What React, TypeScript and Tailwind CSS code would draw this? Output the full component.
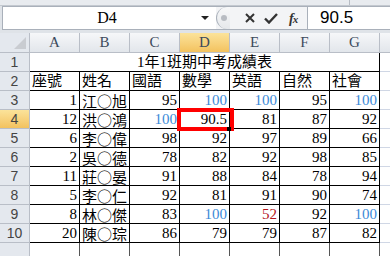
import { Fragment } from 'react';

const cols = ['A', 'B', 'C', 'D', 'E', 'F', 'G'];

const students: [number, string, number[]][] = [
  [1, '江○旭', [95, 100, 100, 95, 100]],
  [12, '洪○鴻', [100, 90.5, 81, 87, 92]],
  [6, '李○偉', [98, 92, 97, 89, 66]],
  [2, '吳○德', [78, 82, 92, 98, 85]],
  [11, '莊○晏', [91, 88, 84, 78, 94]],
  [5, '李○仁', [92, 81, 91, 90, 74]],
  [8, '林○傑', [83, 100, 52, 92, 100]],
  [20, '陳○琮', [86, 79, 79, 87, 82]],
];

const cellFont = { fontFamily: "'Liberation Serif', 'Noto Sans CJK TC', serif" };
const cjkFont = { fontFamily: "'Noto Sans CJK TC', sans-serif" };

const scoreColor = (n: number) => {
  if (n === 100) return 'text-[#3b8ad8]';
  if (n < 60) return 'text-[#b3161c]';
  return 'text-black';
};

const RowHead = ({ n, active }: { n?: number; active?: boolean }) => (
  <div
    className={`w-[30px] shrink-0 flex items-center justify-center border-r border-b border-[#b9bec7] text-[14px] text-[#444] ${
      active ? 'bg-gradient-to-b from-[#fbe39a] to-[#f3c25e]' : 'bg-[#e4e8ee]'
    }`}
    style={{ fontFamily: "'Liberation Sans', sans-serif" }}
  >
    {n}
  </div>
);

const Cell = ({
  children,
  right,
  cjk,
  className = '',
}: {
  children?: React.ReactNode;
  right?: boolean;
  cjk?: boolean;
  className?: string;
}) => (
  <div
    className={`w-[50px] shrink-0 border-r border-b border-black flex items-center px-[2px] text-[15px] leading-none whitespace-nowrap ${
      right ? 'justify-end' : 'justify-start'
    } ${className}`}
    style={cjk ? cjkFont : undefined}
  >
    {children}
  </div>
);

const FormulaBar = () => (
  <div className="h-[33px] bg-[#dfe3e8] flex flex-col">
    <div className="h-[6px] border-b border-[#c3c8cf] bg-[#e8ebef] flex">
      <div className="w-[350px] border-r border-[#b7bcc4]" />
    </div>
    <div className="flex h-[24px] pl-[2px]">
      <div className="w-[214px] bg-white border border-[#a9b0ba] border-r-0 flex items-center">
        <span className="flex-1 text-center text-[16px] text-black pl-[10px]" style={cellFont}>
          D4
        </span>
        <svg width="9" height="5" viewBox="0 0 9 5" className="mr-[6px]">
          <path d="M0 0h8L4 4z" fill="#222" />
        </svg>
      </div>
      <div className="w-[91px] bg-[#f3f4f6] border-y border-[#a9b0ba] flex items-center">
        <div className="w-[14px] h-full rounded-l-full border-l border-[#a9b0ba] bg-gradient-to-b from-[#f7f8f9] to-[#e6e8eb] flex items-center justify-center">
          <div className="w-[6px] h-[6px] rounded-full bg-[#b8bcc2]" />
        </div>
        <svg width="10" height="10" viewBox="0 0 10 10" className="ml-[15px]">
          <path d="M1 1l8 8M9 1l-8 8" stroke="#333" strokeWidth="2" />
        </svg>
        <svg width="14" height="11" viewBox="0 0 14 11" className="ml-[9px]">
          <path d="M1 5.5l4 4 8-8.5" stroke="#333" strokeWidth="2.4" fill="none" />
        </svg>
        <span
          className="ml-[11px] text-[14px] italic font-bold text-[#333] tracking-[-1px]"
          style={cellFont}
        >
          f<span className="text-[11px]">x</span>
        </span>
      </div>
      <div className="flex-1 bg-white border border-[#a9b0ba] border-r-0 flex items-center pl-[12px]">
        <span className="text-[17px] text-black" style={{ fontFamily: "'Liberation Sans', sans-serif" }}>
          90.5
        </span>
      </div>
    </div>
  </div>
);

export default function App() {
  return (
    <div className="w-[390px] h-[256px] overflow-hidden bg-white select-none">
      <FormulaBar />
      {/* column headers */}
      <div className="flex h-[20px]" style={cellFont}>
        <div className="w-[30px] shrink-0 bg-[#e4e8ee] border-r border-b border-[#b9bec7] relative">
          <svg width="12" height="12" viewBox="0 0 12 12" className="absolute right-[3px] bottom-[3px]">
            <path d="M12 0v12H0z" fill="#c9ccd1" />
          </svg>
        </div>
        {[...cols, 'H'].map((c) => (
          <div
            key={c}
            className={`w-[50px] shrink-0 flex items-center justify-center border-r border-b border-[#b9bec7] text-[15px] text-[#3d4a5c] ${
              c === 'D'
                ? 'bg-gradient-to-b from-[#fbe39a] to-[#f3c25e]'
                : 'bg-gradient-to-b from-[#f6f7f9] to-[#e2e6eb]'
            }`}
          >
            {c !== 'H' && c}
          </div>
        ))}
      </div>

      <div className="relative" style={cellFont}>
        {/* row 1 title */}
        <div className="flex h-[19px]">
          <RowHead n={1} />
          <div className="w-[350px] shrink-0 border-r border-b border-black flex items-center justify-center text-[15px] leading-none">
            1年1班期中考成績表
          </div>
          <div className="flex-1 border-b border-[#d0d7e5]" />
        </div>
        {/* row 2 labels */}
        <div className="flex h-[19px]">
          <RowHead n={2} />
          {['座號', '姓名', '國語', '數學', '英語', '自然', '社會'].map((t) => (
            <Cell key={t}>{t}</Cell>
          ))}
          <div className="flex-1 border-b border-[#d0d7e5]" />
        </div>
        {students.map(([no, name, scores], i) => (
          <div key={name + i} className="flex h-[19px]">
            <RowHead n={i + 3} active={i === 1} />
            <Cell right>{no}</Cell>
            <Cell cjk className="text-[14.5px]">{name}</Cell>
            {scores.map((s, j) => (
              <Fragment key={j}>
                <Cell right className={scoreColor(s)}>
                  {s}
                </Cell>
              </Fragment>
            ))}
            <div className="flex-1 border-b border-[#d0d7e5]" />
          </div>
        ))}
        {/* row 11, cut by the window */}
        <div className="flex h-[19px]">
          <RowHead />
          {cols.map((c) => (
            <div key={c} className="w-[50px] shrink-0 border-r border-[#555]" />
          ))}
        </div>

        {/* selected cell marker */}
        <div className="absolute left-[177px] top-[55px] w-[57px] h-[23px] border-[4px] border-[#ff0000]" />
        <div className="absolute left-[227px] top-[74px] w-[4px] h-[4px] bg-black" />
      </div>
    </div>
  );
}
